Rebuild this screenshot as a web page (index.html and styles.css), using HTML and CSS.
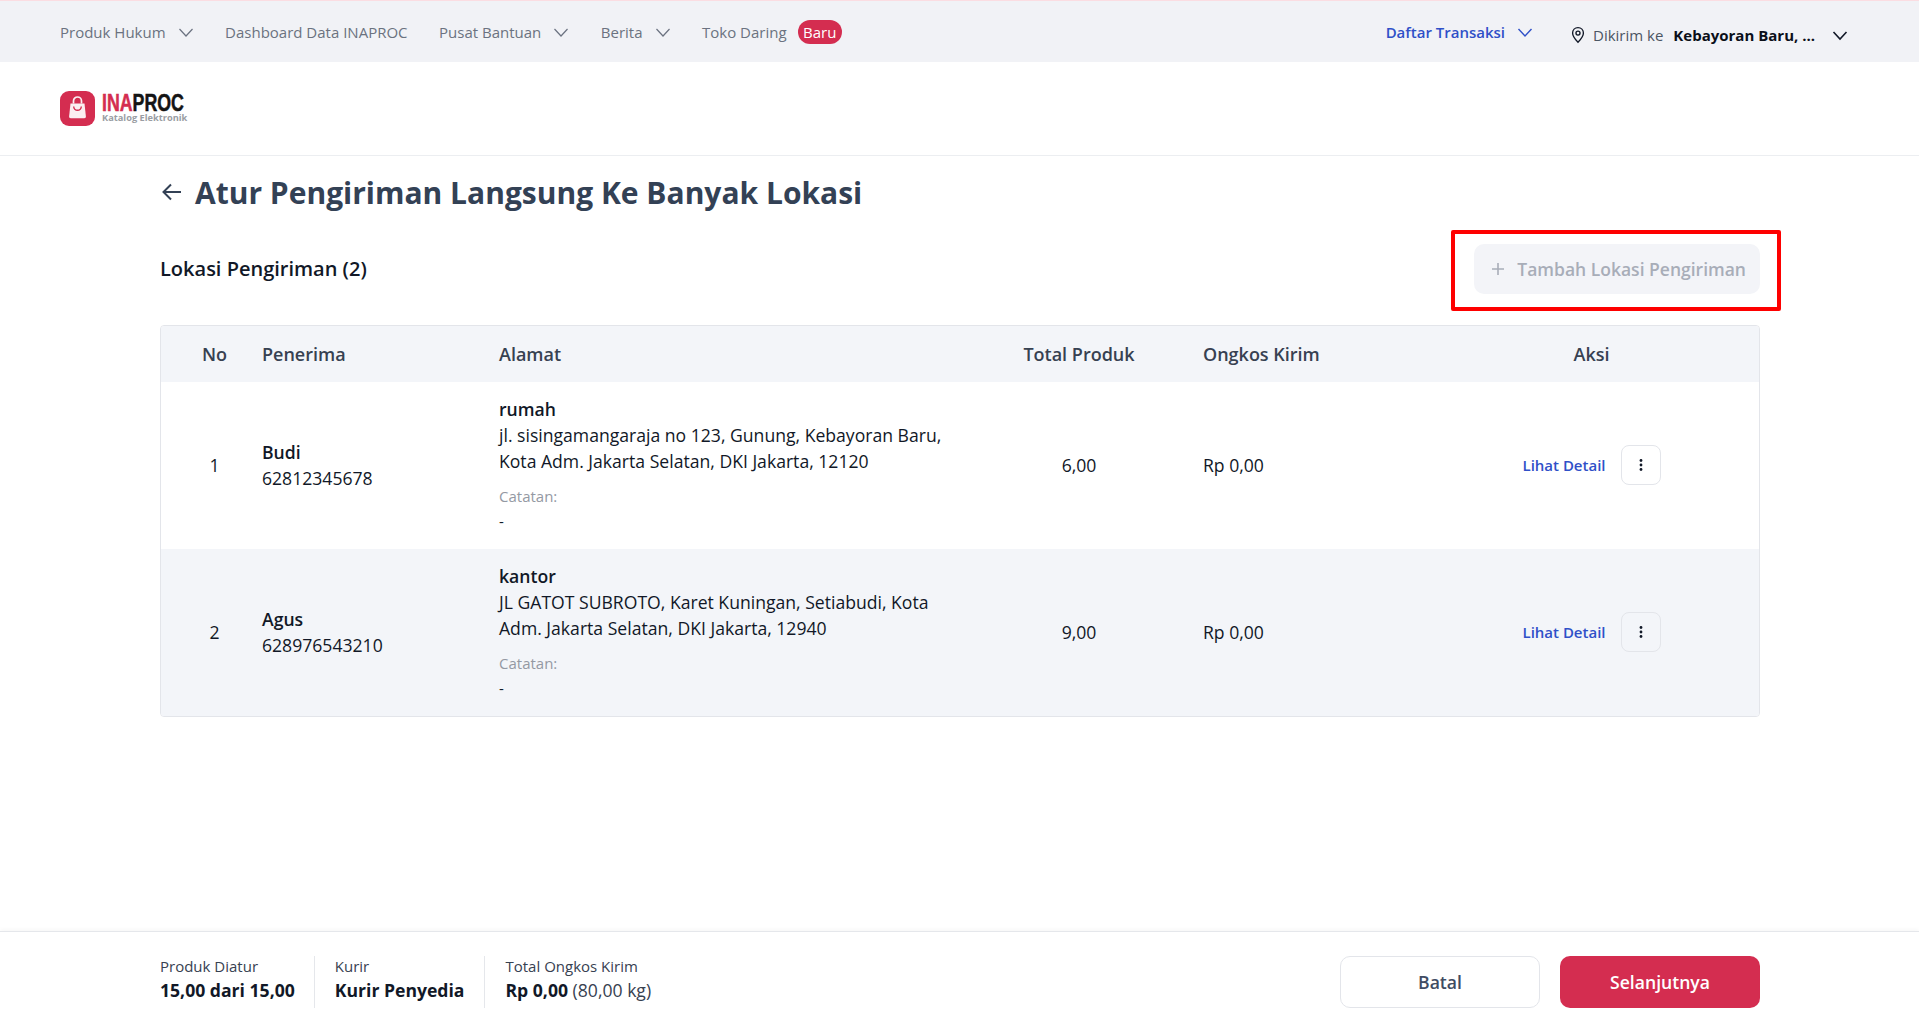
FILE: index.html
```html
<!DOCTYPE html>
<html lang="id">
<head>
<meta charset="utf-8">
<title>Atur Pengiriman</title>
<link rel="stylesheet" href="styles.css">
</head>
<body>
<div class="page">
  <nav class="topbar">
    <div class="nav-left">
      <a class="nav-item">Produk Hukum <svg class="chev" viewBox="0 0 16 16"><path d="M1.5 5l6.5 7 6.5-7"/></svg></a>
      <a class="nav-item">Dashboard Data INAPROC</a>
      <a class="nav-item">Pusat Bantuan <svg class="chev" viewBox="0 0 16 16"><path d="M1.5 5l6.5 7 6.5-7"/></svg></a>
      <a class="nav-item">Berita <svg class="chev" viewBox="0 0 16 16"><path d="M1.5 5l6.5 7 6.5-7"/></svg></a>
      <a class="nav-item nav-toko">Toko Daring <span class="badge">Baru</span></a>
    </div>
    <div class="nav-right">
      <a class="nav-trans">Daftar Transaksi <svg class="chev chev-blue" viewBox="0 0 16 16"><path d="M1.5 5l6.5 7 6.5-7"/></svg></a>
      <div class="nav-loc">
        <svg class="pin" viewBox="0 0 16 16"><path d="M8 1.5c-2.8 0-4.8 2.1-4.8 4.8 0 3.2 3 6.4 4.8 8.2 1.8-1.8 4.8-5 4.8-8.2 0-2.7-2-4.8-4.8-4.8z"/><circle cx="8" cy="6.3" r="1.8"/></svg>
        <span class="loc-label">Dikirim ke</span>
        <strong class="loc-value">Kebayoran Baru, ...</strong>
        <svg class="chev chev-dark" viewBox="0 0 16 16"><path d="M1.5 5l6.5 7 6.5-7"/></svg>
      </div>
    </div>
  </nav>

  <header class="brandbar">
    <div class="logo">
      <svg class="logo-mark" viewBox="0 0 35 35"><rect width="35" height="35" rx="9" fill="#d42d50"/><path d="M10.5 12.5h14l1.4 13c.1 1-.6 1.7-1.6 1.7H10.7c-1 0-1.7-.7-1.6-1.7z" fill="#fbeef1"/><path d="M13.5 12.5v-2.5a4 4 0 0 1 8 0v2.5" fill="none" stroke="#fbeef1" stroke-width="1.7"/><path d="M13.7 15.5a3.8 3.8 0 0 0 7.6 0" fill="none" stroke="#d42d50" stroke-width="1.4"/></svg>
      <div class="logo-text">
        <div class="logo-name"><span class="logo-ina">INA</span>PROC</div>
        <div class="logo-sub">Katalog Elektronik</div>
      </div>
    </div>
  </header>

  <main class="content">
    <div class="title-row">
      <svg class="back" viewBox="0 0 24 24"><path d="M11 4.5l-7.5 7.5 7.5 7.5M4 12H21"/></svg>
      <h1 class="title">Atur Pengiriman Langsung Ke Banyak Lokasi</h1>
    </div>
    <div class="section-row">
      <h2 class="section-title">Lokasi Pengiriman (2)</h2>
      <div class="add-wrap">
        <button class="btn-add"><svg class="plus" viewBox="0 0 16 16"><path d="M8 2v12M2 8h12"/></svg>Tambah Lokasi Pengiriman</button>
        <span class="highlight"></span>
      </div>
    </div>

    <div class="table">
      <div class="tr th">
        <div class="c-no">No</div>
        <div class="c-name">Penerima</div>
        <div class="c-addr">Alamat</div>
        <div class="c-qty">Total Produk</div>
        <div class="c-fee">Ongkos Kirim</div>
        <div class="c-act">Aksi</div>
      </div>
      <div class="tr row">
        <div class="c-no">1</div>
        <div class="c-name"><div class="name">Budi</div><div class="phone">62812345678</div></div>
        <div class="c-addr">
          <div class="addr-label">rumah</div>
          <div class="addr-text">jl. sisingamangaraja no 123, Gunung, Kebayoran Baru, Kota Adm. Jakarta Selatan, DKI Jakarta, 12120</div>
          <div class="note-label">Catatan:</div>
          <div class="note">-</div>
        </div>
        <div class="c-qty">6,00</div>
        <div class="c-fee">Rp 0,00</div>
        <div class="c-act"><a class="detail">Lihat Detail</a><button class="kebab"><svg viewBox="0 0 16 16"><circle cx="8" cy="3.5" r="1.4"/><circle cx="8" cy="8" r="1.4"/><circle cx="8" cy="12.5" r="1.4"/></svg></button></div>
      </div>
      <div class="tr row row-alt">
        <div class="c-no">2</div>
        <div class="c-name"><div class="name">Agus</div><div class="phone">628976543210</div></div>
        <div class="c-addr">
          <div class="addr-label">kantor</div>
          <div class="addr-text">JL GATOT SUBROTO, Karet Kuningan, Setiabudi, Kota Adm. Jakarta Selatan, DKI Jakarta, 12940</div>
          <div class="note-label">Catatan:</div>
          <div class="note">-</div>
        </div>
        <div class="c-qty">9,00</div>
        <div class="c-fee">Rp 0,00</div>
        <div class="c-act"><a class="detail">Lihat Detail</a><button class="kebab"><svg viewBox="0 0 16 16"><circle cx="8" cy="3.5" r="1.4"/><circle cx="8" cy="8" r="1.4"/><circle cx="8" cy="12.5" r="1.4"/></svg></button></div>
      </div>
    </div>
  </main>

  <footer class="footer">
    <div class="summary">
      <div class="sum-item"><div class="sum-label">Produk Diatur</div><div class="sum-value">15,00 dari 15,00</div></div>
      <div class="sum-item"><div class="sum-label">Kurir</div><div class="sum-value">Kurir Penyedia</div></div>
      <div class="sum-item"><div class="sum-label">Total Ongkos Kirim</div><div class="sum-value">Rp 0,00 <span class="sum-light">(80,00 kg)</span></div></div>
    </div>
    <div class="actions">
      <button class="btn btn-cancel">Batal</button>
      <button class="btn btn-next">Selanjutnya</button>
    </div>
  </footer>
</div>
</body>
</html>
```
FILE: styles.css
```css
* { box-sizing: border-box; }
html, body { margin: 0; height: 100%; }
body { font-family: "Open Sans", "Noto Sans", sans-serif; color: #111827; background: #fff; overflow: hidden; }
.page { height: 1031px; display: flex; flex-direction: column; }

.topbar { height: 62px; flex: none; background: #f1f2f6; border-top: 1px solid #fbdde2; display: flex; justify-content: space-between; align-items: center; padding: 0 60px; }
.nav-left { display: flex; align-items: center; gap: 31.5px; }
.nav-item { display: flex; align-items: center; gap: 12px; font-size: 15px; color: #6b7280; line-height: 20px; }
.nav-toko { gap: 11px; }
.badge { background: #d42d50; color: #fff; font-size: 15px; line-height: 24px; height: 24px; padding: 0 5.5px; border-radius: 12px; }
.chev { width: 16px; height: 16px; fill: none; stroke: #6b7280; stroke-width: 1.2; }
.chev-blue { stroke: #2f50c8; stroke-width: 1.4; }
.chev-dark { stroke: #111827; stroke-width: 1.6; }
.nav-right { display: flex; align-items: center; gap: 36px; padding-right: 11px; }
.nav-trans { display: flex; align-items: center; gap: 12px; margin-top: 1px; font-size: 15px; font-weight: 600; color: #2f50c8; }
.nav-loc { display: flex; align-items: center; margin-top: 6px; font-size: 15px; }
.pin { width: 18px; height: 18px; fill: none; stroke: #111827; stroke-width: 1.2; margin-right: 6px; }
.loc-label { color: #4b5563; margin-right: 10px; }
.loc-value { font-weight: 700; color: #0b0f19; margin-right: 17px; }

.brandbar { height: 94px; flex: none; border-bottom: 1px solid #eceef1; padding: 29px 60px 0; }
.logo { display: flex; align-items: center; gap: 7px; }
.logo-mark { width: 35px; height: 35px; display: block; }
.logo-text { width: 86px; margin-top: -3px; }
.logo-name { font-family: "Liberation Sans", sans-serif; font-weight: 700; font-size: 24px; line-height: 20px; color: #141414; -webkit-text-stroke: .5px currentColor; transform: scaleX(.74); transform-origin: left center; white-space: nowrap; }
.logo-ina { color: #d42d50; }
.logo-sub { font-size: 9.25px; font-weight: 700; line-height: 9px; color: #9a9da3; white-space: nowrap; }

.content { flex: 1; padding: 0 159px 0 160px; }
.title-row { display: flex; align-items: center; gap: 11px; margin-top: 17px; height: 40px; }
.back { width: 24px; height: 24px; margin-top: -2px; fill: none; stroke: #334155; stroke-width: 2; }
.title { margin: 0; font-size: 30px; font-weight: 700; line-height: 40px; color: #334155; }
.section-row { display: flex; justify-content: space-between; align-items: center; margin-top: 31px; height: 50px; }
.section-title { margin: 0; font-size: 20px; font-weight: 600; line-height: 28px; color: #111827; }
.add-wrap { position: relative; }
.btn-add { display: flex; align-items: center; gap: 11px; height: 50px; padding: 0 14px 0 16px; border: 0; border-radius: 10px; background: #f3f4f8; color: #a8adb8; font: 600 17.5px "Open Sans", sans-serif; }
.plus { width: 16px; height: 16px; fill: none; stroke: #a8adb8; stroke-width: 1.6; }
.highlight { position: absolute; left: -23px; right: -21px; top: -14px; bottom: -17px; border: 4px solid #fe0000; border-radius: 2px; }

.table { margin-top: 31px; border: 1px solid #e3e5ea; border-radius: 4px; overflow: hidden; width: 1600px; }
.tr { display: grid; grid-template-columns: 101px 237px 524px 180px 221px 335px; align-items: center; line-height: 26px; }
.th { height: 56px; background: #f3f5f9; font-weight: 600; color: #374151; font-size: 18px; }
.row { height: 167px; padding-bottom: 2px; color: #111827; font-size: 17.6px; }
.row-alt { background: #f3f5f9; }
.c-no { padding-left: 6px; text-align: center; }
.c-qty { padding-right: 68px; text-align: center; }
.c-act { display: flex; justify-content: center; align-items: center; gap: 15px; }
.name, .addr-label { font-weight: 600; }
.addr-text { width: 450px; }
.note-label { font-size: 15px; color: #9499a3; margin-top: 10px; line-height: 25px; }
.note { font-size: 15px; line-height: 24px; }
.detail { font-size: 15px; font-weight: 600; color: #2f50c8; }
.kebab { width: 40px; height: 40px; padding: 0; border: 1px solid #e3e5ea; border-radius: 8px; background: transparent; display: flex; align-items: center; justify-content: center; }
.kebab svg { width: 16px; height: 16px; fill: #111827; }

.footer { height: 100px; flex: none; border-top: 1px solid #e5e7eb; box-shadow: 0 -2px 4px rgba(0,0,0,.03); display: flex; justify-content: space-between; align-items: center; padding: 0 159px 0 160px; }
.summary { display: flex; }
.sum-item { height: 52px; padding: 0 20px; border-left: 1px solid #e5e7eb; }
.sum-item:first-child { padding: 0 19px 0 0; border-left: 0; }
.sum-label { font-size: 15px; line-height: 22px; margin-top: -1px; color: #374151; }
.sum-value { font-size: 17.6px; font-weight: 700; line-height: 26px; color: #111827; }
.sum-light { font-weight: 400; color: #374151; }
.actions { display: flex; gap: 20px; }
.btn { width: 200px; height: 52px; border-radius: 10px; font: 600 17.6px "Open Sans", sans-serif; }
.btn-cancel { background: #fff; border: 1px solid #e3e5ea; color: #3f4c63; }
.btn-next { background: #d42d50; border: 0; color: #fff; }
```
